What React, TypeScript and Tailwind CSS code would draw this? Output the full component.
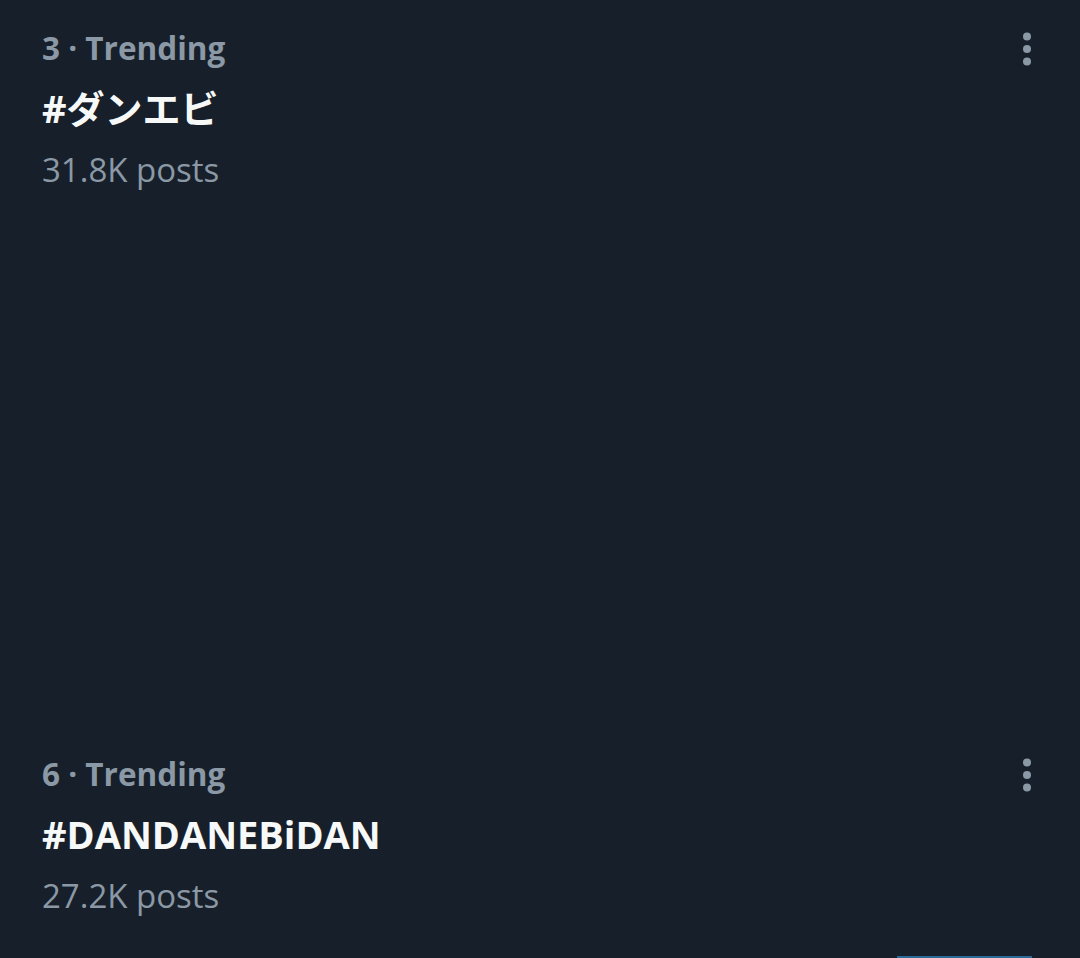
import React from "react";

const trends = [
  { rank: 3, tag: "#ダンエビ", posts: "31.8K posts" },
  { rank: 6, tag: "#DANDANEBiDAN", posts: "27.2K posts" },
];

function MoreIcon() {
  return (
    <svg width="10" height="34" viewBox="0 0 10 34" className="fill-[#8b98a5]">
      <circle cx="5" cy="4.5" r="4" />
      <circle cx="5" cy="17" r="4" />
      <circle cx="5" cy="29.5" r="4" />
    </svg>
  );
}

function TrendRow({ rank, tag, posts }: { rank: number; tag: string; posts: string }) {
  return (
    <div className="flex justify-between pl-[42px] pr-[48px]">
      <div className="flex flex-col">
        <div className="text-[31.5px] leading-[61px] font-bold text-[#8b98a5] h-[61px]">
          {rank} · Trending
        </div>
        <div className="text-[38px] leading-[61px] font-bold text-[#f7f9f9] h-[61px]">{tag}</div>
        <div className="text-[33px] leading-[61px] text-[#8b98a5] h-[61px]">{posts}</div>
      </div>
      <div className="pt-[15px]">
        <MoreIcon />
      </div>
    </div>
  );
}

export default function App() {
  return (
    <div
      className="w-[1080px] h-[958px] bg-[#17202a] overflow-hidden flex flex-col"
      style={{ fontFamily: "'Open Sans', 'Noto Sans CJK JP', sans-serif" }}
    >
      <div className="pt-[17px]">
        <TrendRow {...trends[0]} />
      </div>
      <div className="h-[543px]" />
      <TrendRow {...trends[1]} />
      <div className="flex-1" />
      <div className="flex justify-end pr-[48px]">
        <div className="w-[135px] h-[2px] bg-[#2b6a96]" />
      </div>
    </div>
  );
}
